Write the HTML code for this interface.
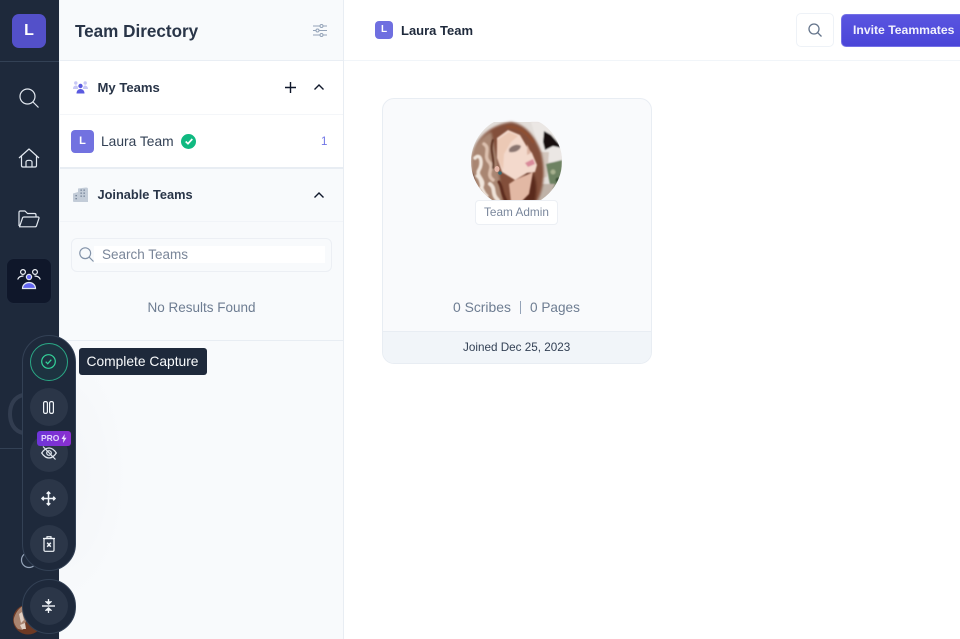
<!DOCTYPE html>
<html><head><meta charset="utf-8">
<style>
*{box-sizing:border-box}
html,body{margin:0;padding:0;width:960px;height:639px;overflow:hidden;background:#fff;font-family:"Liberation Sans",sans-serif}
.a{position:absolute}
.t{position:absolute;white-space:nowrap;line-height:1}
svg{position:absolute;overflow:visible}
.btn{position:absolute;left:29.500px;width:38px;height:38px;border-radius:50%;background:#2b3648}
</style></head>
<body>
<!-- main -->
<div class="a" style="left:344px;top:60px;width:616px;height:1px;background:#f1f5f9"></div>
<div class="a" style="left:375px;top:21px;width:18px;height:18px;border-radius:4px;background:#6f6fe0"></div>
<div class="t" style="left:375px;top:25px;width:18px;text-align:center;font-size:10px;font-weight:bold;color:#fff">L</div>
<div class="t" style="left:401px;top:24px;font-size:13px;font-weight:bold;color:#1e293b">Laura Team</div>
<div class="a" style="left:796px;top:13px;width:38px;height:34px;border:1px solid #eef2f7;border-radius:5px;background:#fff"></div>
<svg style="left:808px;top:23px" width="14" height="14" viewBox="0 0 14 14" fill="none" stroke="#64748b" stroke-width="1.300"><circle cx="6" cy="6" r="5"/><path d="M9.700 9.700L13.500 13.500"/></svg>
<div class="a" style="left:841px;top:14px;width:125px;height:33px;border-radius:5px;background:linear-gradient(#5a55e0,#4a45d8);border:1px solid #7370e6"></div>
<div class="t" style="left:853px;top:24px;font-size:12.200px;font-weight:bold;color:#f1f1fd">Invite Teammates</div>

<!-- card -->
<div class="a" style="left:382px;top:98px;width:269.500px;height:266px;background:#f9fafc;border:1px solid #e8edf3;border-radius:12px;overflow:hidden">
  <div class="a" style="left:0;top:232px;width:270px;height:33px;background:#f1f5f9;border-top:1px solid #e8edf3"></div>
</div>
<svg style="left:471px;top:122px" width="91" height="80" viewBox="0 0 91 80">
  <defs>
    <clipPath id="cd"><circle cx="45.500" cy="39.500" r="45.500"/></clipPath>
    <filter id="b1"><feGaussianBlur stdDeviation="1.200"/></filter>
    <filter id="b2"><feGaussianBlur stdDeviation=".8"/></filter>
  </defs>
  <g clip-path="url(#cd)"><rect y="0" width="91" height="80" fill="#e3deda"/>
    <g filter="url(#b2)">
      <path d="M60 0H91V40H72Z" fill="#ebe7e4"/>
      <path d="M73 9L80 13L88 22L91 26L82 24L74 28L72 20Z" fill="#120f0f"/>
      <path d="M68 30H78L76 55L68 56Z" fill="#d2c5bc"/>
      <path d="M75 42L91 38V66L80 68Z" fill="#6d8262"/>
      <circle cx="82" cy="50" r="2.500" fill="#a7b18f"/><circle cx="87" cy="58" r="2.500" fill="#344c30"/>
      <path d="M70 62L84 62L76 80H66Z" fill="#bfb2a8"/>
    </g>
    <g filter="url(#b1)">
      <path d="M0 36C3 18 18 3 40 0C54 2 64 14 70 30C74 46 74 64 66 80H0Z" fill="#83503a"/>
      <path d="M55 44C64 48 68 62 64 80H50Z" fill="#5a2c1c"/>
      <path d="M0 34C4 22 12 14 20 10L26 40L32 80H0Z" fill="#a98672"/>
    </g>
    <g fill="none" stroke-linecap="round" filter="url(#b2)">
      <path d="M4 36C10 30 12 42 8 48S16 58 10 66" stroke="#f0e4da" stroke-width="3.500"/>
      <path d="M13 22C20 26 12 34 18 40S14 52 22 58" stroke="#dcc0ae" stroke-width="3.500"/>
      <path d="M19 62C25 66 20 72 27 78" stroke="#efe2d8" stroke-width="4"/>
      <path d="M6 54C12 58 8 66 16 74" stroke="#f0e6dd" stroke-width="3"/>
      <path d="M22 18C18 28 24 36 22 46" stroke="#5c3022" stroke-width="2"/>
      <path d="M0 50C4 56 2 62 6 68" stroke="#5b3020" stroke-width="2"/>
      <path d="M28 60C32 66 30 72 36 80" stroke="#5b2a1a" stroke-width="3"/>
      <path d="M36 5C46 4 56 10 62 20" stroke="#8f4f33" stroke-width="2.500"/>
    </g>
    <g filter="url(#b2)">
      <path d="M44 58L62 50L58 72L50 80H40L38 62Z" fill="#e2b8a4"/>
      <path d="M26 16L37 8L49 13L56 25L61 31L66 43L64 50L56 51L44 58L31 50L26 36Z" fill="#f3d9cc"/>
      <path d="M26 18L38 10L47 14L40 20L33 32L32 48L27 38Z" fill="#ecc9b5"/>
      <path d="M38 27C42 22 48 22 50 24C49 29 43 31 38 30Z" fill="#8a7470"/>
      <path d="M54 41L62 37L64 42L57 45Z" fill="#d98a9a"/>
      <path d="M56 22L60 31L56 33Z" fill="#dcb4a2"/>
    </g>
    <ellipse cx="26" cy="47" rx="2.500" ry="3" fill="#e7b7a8"/>
    <circle cx="29" cy="51" r="1.800" fill="#3a6a72"/>
  </g>
</svg>
<div class="a" style="left:475px;top:200px;width:83px;height:25px;background:#fff;border:1px solid #eceff4;border-radius:4px"></div>
<div class="t" style="left:484px;top:207px;font-size:11.800px;color:#7a879c">Team Admin</div>
<div class="t" style="left:453px;top:301px;font-size:13.900px;color:#6e7d92">0 Scribes</div>
<div class="a" style="left:520px;top:301px;width:1px;height:13px;background:#94a3b8"></div>
<div class="t" style="left:530px;top:301px;font-size:13.600px;color:#6e7d92">0 Pages</div>
<div class="t" style="left:463px;top:342px;font-size:11.700px;color:#334155">Joined Dec 25, 2023</div>

<!-- panel -->
<div class="a" style="left:60px;top:0;width:284px;height:639px;background:#f8fafc;border-right:1px solid #e8edf3"></div>
<div class="t" style="left:75px;top:23px;font-size:17.100px;font-weight:bold;color:#293548">Team Directory</div>
<svg style="left:313px;top:24px" width="14" height="13" viewBox="0 0 14 13" fill="none" stroke="#94a3b8" stroke-width="1"><path d="M0 2H7M10 2H14M0 6.500H3M6 6.500H14M0 11H7M10 11H14"/><circle cx="8.500" cy="2" r="1.500"/><circle cx="4.500" cy="6.500" r="1.500"/><circle cx="8.500" cy="11" r="1.500"/></svg>
<div class="a" style="left:60px;top:60px;width:283px;height:1px;background:#e9eef4"></div>
<div class="a" style="left:60px;top:61px;width:283px;height:107px;background:#fff"></div>
<div class="a" style="left:60px;top:114px;width:283px;height:1px;background:#f4f6f9"></div>
<div class="a" style="left:60px;top:167px;width:283px;height:2px;background:#e8edf3"></div>
<svg style="left:73px;top:81px" width="15" height="13" viewBox="0 0 15 13"><circle cx="2.800" cy="2" r="1.700" fill="#c7c7f5"/><circle cx="12.200" cy="2" r="1.700" fill="#c7c7f5"/><path d="M0 8C0 5.500 1.500 4.500 3 4.500S5 5.500 5 8ZM10 8C10 5.500 11 4.500 12 4.500S15 5.500 15 8Z" fill="#c7c7f5"/><circle cx="7.500" cy="5" r="2.200" fill="#5a5ae0"/><path d="M3.500 12.500C3.500 9.500 5.500 8 7.500 8S11.500 9.500 11.500 12.500Z" fill="#5a5ae0"/></svg>
<div class="t" style="left:97.500px;top:80.500px;font-size:13.100px;font-weight:bold;color:#293548">My Teams</div>
<svg style="left:285px;top:82px" width="11" height="11" viewBox="0 0 11 11" stroke="#0f172a" stroke-width="1.400"><path d="M5.500 0V11M0 5.500H11"/></svg>
<svg style="left:314px;top:84px" width="10" height="6" viewBox="0 0 10 6" fill="none" stroke="#0f172a" stroke-width="1.400"><path d="M.5 5.500L5 1L9.500 5.500"/></svg>
<div class="a" style="left:71px;top:130px;width:23px;height:23px;border-radius:4px;background:#7272e0"></div>
<div class="t" style="left:71px;top:136px;width:23px;text-align:center;font-size:11px;font-weight:bold;color:#fff">L</div>
<div class="t" style="left:101px;top:134.500px;font-size:13.800px;color:#334155">Laura Team</div>
<div class="a" style="left:181px;top:134px;width:15px;height:15px;border-radius:50%;background:#10b981"></div>
<svg style="left:184.500px;top:138px" width="8" height="7" viewBox="0 0 8 7" fill="none" stroke="#fff" stroke-width="1.700"><path d="M.7 3.500L3 5.700L7.300 1"/></svg>
<div class="t" style="left:321px;top:136.500px;font-size:11.500px;color:#6f74e6">1</div>
<svg style="left:73px;top:187px" width="15" height="15" viewBox="0 0 15 15"><path d="M0 6.500L5 5V1.500L13 .5C14.300.5 15 1 15 2V15H1C.3 15 0 14.500 0 14Z" fill="#c3ccd8"/><g fill="#6b7a90"><rect x="7.500" y="2.500" width="1.300" height="1.300"/><rect x="10.500" y="2.500" width="1.300" height="1.300"/><rect x="7.500" y="5.500" width="1.300" height="1.300"/><rect x="10.500" y="5.500" width="1.300" height="1.300"/><rect x="7.500" y="8.500" width="1.300" height="1.300"/><rect x="10.500" y="8.500" width="1.300" height="1.300"/><rect x="2.500" y="8" width="1.300" height="1.300"/><rect x="2.500" y="11" width="1.300" height="1.300"/></g></svg>
<div class="t" style="left:97.500px;top:188.500px;font-size:12.800px;font-weight:bold;color:#293548">Joinable Teams</div>
<svg style="left:314px;top:192px" width="10" height="6" viewBox="0 0 10 6" fill="none" stroke="#0f172a" stroke-width="1.400"><path d="M.5 5.500L5 1L9.500 5.500"/></svg>
<div class="a" style="left:60px;top:221px;width:283px;height:1px;background:#f1f4f8"></div>
<div class="a" style="left:71px;top:238px;width:261px;height:34px;border:1px solid #eceff4;border-radius:6px"></div>
<div class="a" style="left:94px;top:246px;width:231px;height:17px;background:#fff"></div>
<svg style="left:79px;top:247px" width="15" height="15" viewBox="0 0 15 15" fill="none" stroke="#8292a8" stroke-width="1.200"><circle cx="6.200" cy="6.200" r="5.400"/><path d="M10 10L14.500 14.500"/></svg>
<div class="t" style="left:102px;top:248px;font-size:13.500px;color:#7a8699">Search Teams</div>
<div class="t" style="left:147.500px;top:301px;font-size:13.500px;color:#6e7d92">No Results Found</div>
<div class="a" style="left:60px;top:340px;width:283px;height:1px;background:#e8edf3"></div>

<!-- halo -->
<div class="a" style="left:60px;top:340px;width:70px;height:270px;background:radial-gradient(ellipse at left center,rgba(15,23,42,.02),rgba(15,23,42,0) 72%)"></div>

<!-- sidebar -->
<div class="a" style="left:0;top:0;width:59px;height:639px;background:#1e293b"></div>
<div class="a" style="left:59px;top:0;width:1px;height:639px;background:#f1f5f9"></div>
<div class="a" style="left:0;top:61px;width:59px;height:1px;background:#334155"></div>
<div class="a" style="left:0;top:448px;width:59px;height:1px;background:#334155"></div>
<div class="a" style="left:12px;top:14px;width:34px;height:34px;border-radius:7px;background:#5350c9"></div>
<div class="t" style="left:12px;top:23px;width:34px;text-align:center;font-size:16px;font-weight:bold;color:#fff">L</div>
<svg style="left:19px;top:88px" width="20" height="20" viewBox="0 0 20 20" fill="none" stroke="#e2e8f0" stroke-width="1.200"><circle cx="8.500" cy="8.500" r="7.500"/><path d="M14 14L19.500 19.500"/></svg>
<svg style="left:18px;top:148px" width="22" height="20" viewBox="0 0 22 20" fill="none" stroke="#e2e8f0" stroke-width="1.200" stroke-linejoin="round"><path d="M1 10L11 1L21 10M3.500 8V17.500C3.500 18.500 4 19 5 19H17C18 19 18.500 18.500 18.500 17.500V8"/><path d="M8 19V14C8 13 9 12.300 11 12.300S14 13 14 14V19"/></svg>
<svg style="left:18px;top:210px" width="22" height="18" viewBox="0 0 22 18" fill="none" stroke="#e2e8f0" stroke-width="1.200" stroke-linejoin="round"><path d="M1 16V2.500C1 1.500 1.500 1 2.500 1H7L9.500 3.500H16.500C17.500 3.500 18 4 18 5V7"/><path d="M1.500 16.800L4.500 8C4.700 7.300 5 7 6 7H20C20.800 7 21.200 7.500 21 8.200L18.500 15.800C18.300 16.500 17.900 16.800 17 16.800Z"/></svg>
<div class="a" style="left:6px;top:258px;width:46px;height:46px;border-radius:8px;background:#0f172a;border:1px solid #1f2a3d"></div>
<svg style="left:17px;top:269px" width="24" height="21" viewBox="0 0 24 21" fill="none" stroke="#f1f5f9" stroke-width="1.200"><circle cx="6" cy="3" r="2.400"/><circle cx="18" cy="3" r="2.400"/><path d="M.7 10.500C1.500 8 3.500 7 6.500 7M23.300 10.500C22.500 8 20.500 7 17.500 7"/><circle cx="12" cy="8" r="2.600" fill="#6366f1" stroke="#e2e8f0"/><path d="M5.500 19.500C5.500 15.500 9 13.500 12 13.500S18.500 15.500 18.500 19.500Z" fill="#6366f1" stroke="#e2e8f0"/></svg>
<svg style="left:6px;top:392px" width="24" height="44" viewBox="0 0 24 44" fill="none" stroke="#323d50" stroke-width="4"><path d="M17 3C8 5 4 13 4 22C4 31 8 39 17 41"/></svg>
<svg style="left:20px;top:552px" width="18" height="16" viewBox="0 0 18 16" fill="none" stroke="#94a3b8" stroke-width="1.200"><circle cx="9" cy="8" r="7.500"/></svg>
<svg style="left:13px;top:604px" width="30" height="31" viewBox="0 0 30 31"><circle cx="15" cy="15.500" r="15" fill="#6e3a25"/><path d="M1 14C3 8 6 4 10 2L14 14L10 26L5 25C2 22 0 18 1 14Z" fill="#a98470"/><path d="M6 10L9 8L11 16L8 19ZM7 21L12 19L13 25L9 25Z" fill="#e1d0c4"/></svg>

<!-- capsule -->
<div class="a" style="left:21.500px;top:335px;width:54.500px;height:236px;border-radius:27.250px;background:#1e293b;border:1px solid #334155"></div>
<div class="btn" style="top:343px;background:#1d3340;border:1.200px solid #2aa885"></div>
<svg style="left:41px;top:354px" width="15" height="15" viewBox="0 0 15 15" fill="none" stroke="#34d399" stroke-width="1.200"><circle cx="7.500" cy="7.500" r="6.800"/><path d="M4.700 7.700L6.700 9.700L10.300 5.700"/></svg>
<div class="btn" style="top:388px"></div>
<svg style="left:43px;top:401px" width="11" height="13" viewBox="0 0 11 13" fill="none" stroke="#f1f5f9" stroke-width="1.200"><rect x=".6" y=".6" width="3.800" height="11.800" rx="1.500"/><rect x="6.600" y=".6" width="3.800" height="11.800" rx="1.500"/></svg>
<div class="btn" style="top:434px"></div>
<svg style="left:41px;top:446px" width="16" height="14" viewBox="0 0 16 14" fill="none" stroke="#e2e8f0" stroke-width="1.200"><path d="M.7 7C3 3.500 5.500 2 8 2S13 3.500 15.300 7C13 10.500 10.500 12 8 12S3 10.500 .7 7Z"/><circle cx="8" cy="7" r="2.300"/><path d="M2 .5L14.500 13.500"/></svg>
<div class="a" style="left:36.500px;top:431px;width:34.500px;height:14.500px;border-radius:3px;background:linear-gradient(90deg,#6d35d8,#8b2fd0)"></div>
<div class="t" style="left:41px;top:434px;font-size:8.500px;font-weight:bold;color:#e2d6fb">PRO</div>
<svg style="left:61px;top:434px" width="6" height="9" viewBox="0 0 6 9"><path d="M3.800 0L.5 5H2.500L2 9L5.500 3.800H3.300Z" fill="#ece4fd"/></svg>
<div class="btn" style="top:479px"></div>
<svg style="left:41px;top:491px" width="15" height="15" viewBox="0 0 15 15" fill="none" stroke="#f1f5f9" stroke-width="1.500"><path d="M7.500 1V14M1 7.500H14M5.700 2.800L7.500 1L9.300 2.800M5.700 12.200L7.500 14L9.300 12.200M2.800 5.700L1 7.500L2.800 9.300M12.200 5.700L14 7.500L12.200 9.300"/></svg>
<div class="btn" style="top:525px"></div>
<svg style="left:42.500px;top:536px" width="12" height="16" viewBox="0 0 12 16" fill="none" stroke="#f1f5f9" stroke-width="1.200"><path d="M0 2.500H12M4 2.500V.7H8V2.500"/><rect x="1" y="2.500" width="10" height="12.800" rx="1.200"/><path d="M4.200 6.800L7.800 10.800M7.800 6.800L4.200 10.800" stroke-width="1.500"/></svg>
<div class="a" style="left:21.500px;top:579px;width:54.500px;height:54.500px;border-radius:50%;background:#1e293b;border:1px solid #334155"></div>
<div class="btn" style="top:587px"></div>
<svg style="left:42px;top:598.500px" width="13" height="14" viewBox="0 0 13 14" fill="#f1f5f9" stroke="#f1f5f9"><path d="M0 7H13" stroke-width="1.400"/><path d="M6.500 0V3M6.500 11V14" stroke-width="1.300"/><path d="M3 2.500L6.500 5.700L10 2.500Z M3 11.500L6.500 8.300L10 11.500Z" stroke-width=".5"/></svg>

<!-- tooltip -->
<div class="a" style="left:79px;top:348px;width:127.500px;height:27px;background:#1e293b;border-radius:3px"></div>
<div class="t" style="left:86.500px;top:355px;font-size:13.800px;color:#f8fafc">Complete Capture</div>
</body></html>
